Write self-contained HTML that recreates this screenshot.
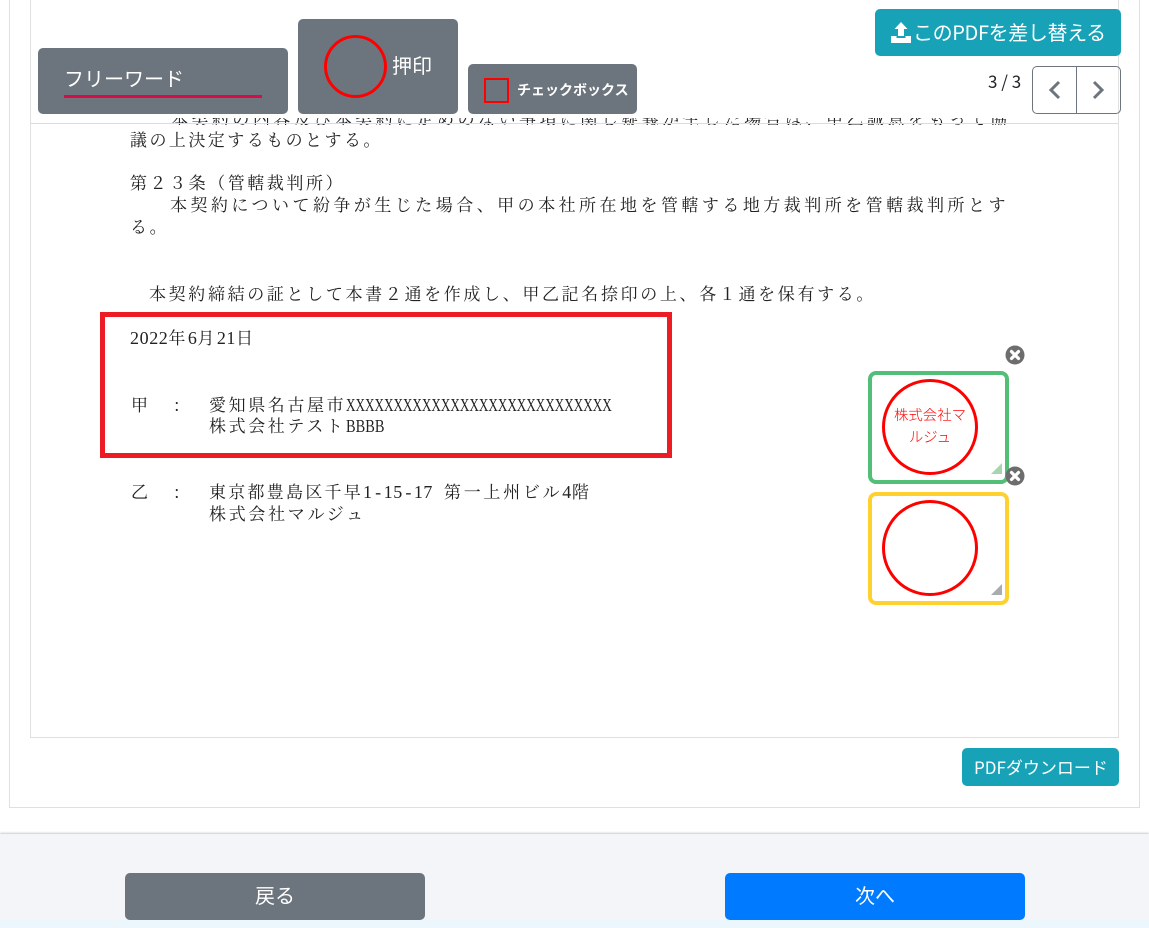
<!DOCTYPE html>
<html lang="ja"><head><meta charset="utf-8">
<style>
html,body{margin:0;padding:0;width:1149px;height:928px;overflow:hidden;background:#fff;font-family:"Liberation Sans","Noto Sans CJK JP",sans-serif}
.a{position:absolute;box-sizing:border-box}
.ui{font-family:"Noto Sans CJK JP","Liberation Sans",sans-serif;color:#fff;white-space:nowrap;line-height:1}
.d{position:absolute;white-space:nowrap;font-family:"Noto Serif CJK SC","Liberation Serif",serif;font-size:17px;line-height:20px;letter-spacing:2.6px;color:#222;font-weight:400}
.m{letter-spacing:.6px;font-family:"Liberation Serif",serif;font-size:18px;font-weight:400}
.s{display:inline-block;letter-spacing:0;font-family:"Liberation Serif",serif;font-size:18px;transform-origin:left center}
.h{margin:0 2.5px;letter-spacing:0}
.g{background:#6c757d;border-radius:5px}
.t{background:#17a2b8;border-radius:5px}
</style></head><body>
<div class="a" style="left:9px;top:-2px;width:1131px;height:810px;border:1px solid #e0e0e0"></div>
<div class="a" style="left:30px;top:-2px;width:1089px;height:740px;border:1px solid #e0e0e0"></div>

<div class="a" style="left:131px;top:118px;width:900px;height:7px;overflow:hidden">
<div class="d" style="left:40px;top:-10px;letter-spacing:3.47px">本契約の内容及び本契約に定めのない事項に関し疑義が生じた場合は、甲乙誠意をもって協</div></div>
<div class="a" style="left:31px;top:123px;width:1087px;height:1px;background:#dcdcdc"></div>
<div class="d" style="left:130px;top:129px;letter-spacing:2.45px">議の上決定するものとする。</div>
<div class="d" style="left:130px;top:172px;letter-spacing:2.55px">第２３条（管轄裁判所）</div>
<div class="d" style="left:170px;top:194px;letter-spacing:3.47px">本契約について紛争が生じた場合、甲の本社所在地を管轄する地方裁判所を管轄裁判所とす</div>
<div class="d" style="left:130px;top:216px">る。</div>
<div class="d" style="left:149px;top:283px;letter-spacing:2.65px">本契約締結の証として本書２通を作成し、甲乙記名捺印の上、各１通を保有する。</div>
<div class="d" style="left:130px;top:327px;letter-spacing:2.4px"><span class="m">2022</span>年<span class="m">6</span>月<span class="m">21</span>日</div>
<div class="d" style="left:131px;top:394px">甲</div>
<div class="d" style="left:174px;top:394px">:</div>
<div class="d" style="left:209px;top:394px">愛知県名古屋市<span class="s" style="width:266px;transform:scaleX(.73)">XXXXXXXXXXXXXXXXXXXXXXXXXXXX</span></div>
<div class="d" style="left:209px;top:415px">株式会社テスト<span class="s" style="width:39px;transform:scaleX(.8)">BBBB</span></div>
<div class="d" style="left:131px;top:481px">乙</div>
<div class="d" style="left:174px;top:481px">:</div>
<div class="d" style="left:209px;top:481px;letter-spacing:2.25px">東京都豊島区千早<span class="m" style="margin-right:11px">1<span class="h">-</span>15<span class="h">-</span>17</span><span style="letter-spacing:2.7px">第一上州ビル</span><span class="m">4</span>階</div>
<div class="d" style="left:209px;top:503px;letter-spacing:2.7px">株式会社マルジュ</div>

<div class="a" style="left:100px;top:312px;width:572px;height:146px;border:5px solid #ed1c24"></div>

<div class="a g" style="left:38px;top:48px;width:250px;height:66px"></div>
<div class="a ui" style="left:64px;top:68px;font-size:20px">フリーワード</div>
<div class="a" style="left:64px;top:95px;width:198px;height:3px;background:#dc0a46"></div>

<div class="a g" style="left:298px;top:19px;width:160px;height:95px"></div>
<div class="a" style="left:324px;top:35px;width:63px;height:63px;border:3px solid #f00;border-radius:50%"></div>
<div class="a ui" style="left:392px;top:55px;font-size:20px">押印</div>

<div class="a g" style="left:468px;top:64px;width:169px;height:50px"></div>
<div class="a" style="left:484px;top:78px;width:25px;height:25px;border:2px solid #f00"></div>
<div class="a ui" style="left:517px;top:83px;font-size:14px;font-weight:700">チェックボックス</div>

<div class="a t" style="left:875px;top:9px;width:246px;height:47px"></div>
<svg class="a" style="left:891px;top:21px" width="21" height="23" viewBox="0 0 21 23"><path d="M10 1L3.500 8H7V15H13V8H16.500Z" fill="#fff"/><path d="M0 15H5.500V17H14.500V15H20V22H0Z" fill="#fff"/></svg>
<div class="a ui" style="left:913px;top:22px;font-size:20px;letter-spacing:-.37px">このPDFを差し替える</div>

<div class="a" style="left:988px;top:72px;font-size:17px;line-height:18px;color:#212529;white-space:nowrap;font-family:'Noto Sans CJK JP',sans-serif">3 / 3</div>
<div class="a" style="left:1032px;top:66px;width:89px;height:48px;border:1px solid #6c757d;border-radius:5px"></div>
<div class="a" style="left:1076px;top:67px;width:1px;height:46px;background:#6c757d"></div>
<svg class="a" style="left:1032px;top:66px" width="89" height="48" viewBox="0 0 89 48" fill="none" stroke="#6c757d" stroke-width="3"><path d="M27 16L19 24L27 32"/><path d="M62 16L70 24L62 32"/></svg>

<div class="a" style="left:868px;top:371px;width:141px;height:113px;border:4px solid #52be78;border-radius:8px;background:#fff"></div>
<div class="a" style="left:882px;top:379px;width:96px;height:96px;border:3.5px solid #f00;border-radius:50%;background:#fff"></div>
<div class="a" style="left:892px;top:404px;width:76px;text-align:center;font-size:14.4px;line-height:22px;color:#f00;font-weight:300;font-family:'Noto Sans CJK JP',sans-serif">株式会社マルジュ</div>
<div class="a" style="left:991px;top:463px;width:0;height:0;border-left:11px solid transparent;border-bottom:11px solid #a5d6b0"></div>

<div class="a" style="left:868px;top:492px;width:141px;height:113px;border:4px solid #ffd12e;border-radius:8px;background:#fff"></div>
<div class="a" style="left:882px;top:500px;width:96px;height:96px;border:3.5px solid #f00;border-radius:50%;background:#fff"></div>
<div class="a" style="left:991px;top:584px;width:0;height:0;border-left:11px solid transparent;border-bottom:11px solid #a8abb0"></div>

<svg class="a" style="left:1005px;top:345px" width="20" height="20" viewBox="0 0 20 20"><circle cx="10" cy="10" r="9.500" fill="#6d6d6d"/><path d="M6.500 6.500L13.500 13.500M13.500 6.500L6.500 13.500" stroke="#fff" stroke-width="3.200" stroke-linecap="round"/></svg>
<svg class="a" style="left:1005px;top:466px" width="20" height="20" viewBox="0 0 20 20"><circle cx="10" cy="10" r="9.500" fill="#6d6d6d"/><path d="M6.500 6.500L13.500 13.500M13.500 6.500L6.500 13.500" stroke="#fff" stroke-width="3.200" stroke-linecap="round"/></svg>

<div class="a t" style="left:962px;top:748px;width:157px;height:38px"></div>
<div class="a ui" style="left:974px;top:758px;font-size:17px">PDFダウンロード</div>

<div class="a" style="left:0;top:834px;width:1149px;height:94px;background:#f3f5f9;box-shadow:0 -1px 2px rgba(0,0,0,.22)"></div>
<div class="a" style="left:0;top:920px;width:1149px;height:8px;background:#ecf7fd"></div>
<div class="a g" style="left:125px;top:873px;width:300px;height:47px"></div>
<div class="a ui" style="left:125px;top:885px;width:300px;text-align:center;font-size:20px">戻る</div>
<div class="a" style="left:725px;top:873px;width:300px;height:47px;background:#007bff;border-radius:5px"></div>
<div class="a ui" style="left:725px;top:885px;width:300px;text-align:center;font-size:20px">次へ</div>
</body></html>
